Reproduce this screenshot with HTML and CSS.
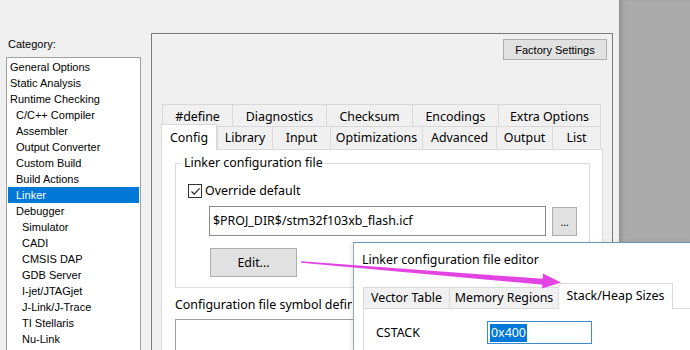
FILE: index.html
```html
<!DOCTYPE html>
<html>
<head>
<meta charset="utf-8">
<title>Linker options</title>
<link rel="stylesheet" href="styles.css">
</head>
<body>
<div class="screen">
  <div class="window">
    <div class="side">
      <div class="cat-label">Category:</div>
      <ul class="cat-list">
        <li>General Options</li>
        <li>Static Analysis</li>
        <li>Runtime Checking</li>
        <li class="l1">C/C++ Compiler</li>
        <li class="l1">Assembler</li>
        <li class="l1">Output Converter</li>
        <li class="l1">Custom Build</li>
        <li class="l1">Build Actions</li>
        <li class="l1 sel">Linker</li>
        <li class="l1">Debugger</li>
        <li class="l2">Simulator</li>
        <li class="l2">CADI</li>
        <li class="l2">CMSIS DAP</li>
        <li class="l2">GDB Server</li>
        <li class="l2">I-jet/JTAGjet</li>
        <li class="l2">J-Link/J-Trace</li>
        <li class="l2">TI Stellaris</li>
        <li class="l2">Nu-Link</li>
      </ul>
    </div>
    <div class="panel">
      <div class="panel-head"><button class="btn factory">Factory Settings</button></div>
      <div class="tabs">
        <div class="tab-row back">
          <div class="tab t-define">#define</div>
          <div class="tab t-diag">Diagnostics</div>
          <div class="tab t-check">Checksum</div>
          <div class="tab t-enc">Encodings</div>
          <div class="tab t-extra last">Extra Options</div>
        </div>
        <div class="tab-row front">
          <div class="tab t-config active">Config</div>
          <div class="tab t-lib">Library</div>
          <div class="tab t-input">Input</div>
          <div class="tab t-opt">Optimizations</div>
          <div class="tab t-adv">Advanced</div>
          <div class="tab t-out">Output</div>
          <div class="tab t-list last">List</div>
        </div>
        <div class="pane">
          <fieldset class="group">
            <legend>Linker configuration file</legend>
            <div class="check-row">
              <span class="checkbox"><svg width="11" height="11" viewBox="0 0 11 11"><path d="M1.5 5.5 L4.2 8.2 L9.6 2.4" fill="none" stroke="#222" stroke-width="1.2"/></svg></span>
              <span>Override default</span>
            </div>
            <div class="path-row">
              <div class="path-field">$PROJ_DIR$/stm32f103xb_flash.icf</div>
              <button class="btn browse">...</button>
            </div>
            <button class="btn edit">Edit...</button>
          </fieldset>
          <div class="sym-label">Configuration file symbol defin</div>
          <div class="sym-box"></div>
        </div>
      </div>
    </div>
  </div>
  <div class="desktop"></div>

  <div class="dialog">
    <div class="dlg-title">Linker configuration file editor</div>
    <div class="dlg-tabs">
      <div class="dtab d-vec">Vector Table</div>
      <div class="dtab d-mem">Memory Regions</div>
      <div class="dtab d-stack active">Stack/Heap Sizes</div>
    </div>
    <div class="dlg-pane">
      <div class="dlg-row">
        <span class="dlg-label">CSTACK</span>
        <div class="dlg-input"><span class="selected-text">0x400</span></div>
      </div>
    </div>
  </div>

  <svg class="arrow" width="690" height="350" viewBox="0 0 690 350">
    <polygon points="301,261.3 301,262.8 546,285 546.3,279" fill="#e244e2"/>
    <polygon points="543,273.5 561,282.5 542,288.5" fill="#e244e2"/>
  </svg>
</div>
</body>
</html>
```
FILE: styles.css
```css
* { box-sizing: border-box; }
html, body { margin: 0; padding: 0; }
body {
  width: 690px;
  height: 350px;
  overflow: hidden;
  background: #f0f0f0;
  color: #000;
  font-family: "Noto Sans", "Liberation Sans", sans-serif;
  font-size: 12.4px;
}
.screen {
  position: relative;
  display: flex;
  width: 690px;
  height: 350px;
  overflow: hidden;
}
.window {
  width: 619px;
  height: 350px;
  display: flex;
  background: #f0f0f0;
}
.desktop {
  flex: 1;
  background: #aaaaaa;
  box-shadow: inset 5px 0 5px -3px rgba(0,0,0,0.18);
}

/* category list */
.side { width: 151px; padding-top: 37px; }
.cat-label {
  font-family: "Liberation Sans", Arial, sans-serif;
  font-size: 11px;
  line-height: 14px;
  height: 20px;
  padding-left: 8px;
}
.cat-list {
  list-style: none;
  margin: 0 0 0 6px;
  padding: 1px;
  width: 135px;
  height: 300px;
  border: 1px solid #a0a0a0;
  background: #fff;
  font-family: "Liberation Sans", Arial, sans-serif;
  font-size: 11px;
}
.cat-list li {
  height: 16px;
  line-height: 16px;
  padding-left: 2px;
  white-space: nowrap;
}
.cat-list li.l1 { padding-left: 8px; }
.cat-list li.l2 { padding-left: 14px; }
.cat-list li.sel { background: #0078d7; color: #fff; }

/* right panel */
.panel {
  width: 462px;
  height: 330px;
  margin-top: 33px;
  border: 1px solid #7a7a7a;
  border-bottom: none;
  display: flex;
  flex-direction: column;
}
.panel-head {
  display: flex;
  justify-content: flex-end;
  padding: 5px 5px 0 0;
}
.btn {
  font: inherit;
  color: #000;
  background: #e1e1e1;
  border: 1px solid #adadad;
  padding: 0;
  margin: 0;
}
.factory {
  width: 104px;
  height: 21px;
  font-family: "Liberation Sans", Arial, sans-serif;
  font-size: 11px;
}

/* tabs */
.tabs { margin: 44px 0 0 9px; width: 442px; }
.tab-row { display: flex; }
.tab-row.back { height: 22px; margin-left: 1px; }
.tab-row.front { height: 23px; align-items: flex-start; }
.tab {
  border-top: 1px solid #d9d9d9;
  border-left: 1px solid #d9d9d9;
  background: #f0f0f0;
  text-align: center;
  line-height: 18px;
  white-space: nowrap;
}
.tab.last { border-right: 1px solid #d9d9d9; }
.back .tab { height: 22px; padding-top: 3px; }
.front .tab { height: 23px; padding-top: 2px; }
.front .tab.active {
  position: relative;
  z-index: 1;
  height: 26px;
  margin-top: -2px;
  padding-top: 4px;
  background: #fff;
  border-right: 1px solid #d9d9d9;
}
.t-define { width: 70px; }
.t-diag { width: 94px; }
.t-check { width: 86px; }
.t-enc { width: 86px; }
.t-extra { width: 103px; }
.t-config { width: 56px; }
.t-lib { width: 55px; }
.t-input { width: 58px; }
.t-opt { width: 92px; }
.t-adv { width: 74px; }
.t-out { width: 56px; }
.t-list { width: 49px; }

.pane {
  width: 442px;
  height: 210px;
  background: #fff;
  border: 1px solid #d9d9d9;
  padding: 0 12px 0 13px;
}

/* group box */
.group {
  margin: 5px 0 0 0;
  padding: 0 12px 10px 12px;
  border: 1px solid #dcdcdc;
  min-width: 0;
}
.group legend {
  padding: 0 2px;
  margin-left: -6px;
  line-height: 16px;
}
.check-row {
  display: flex;
  align-items: center;
  height: 16px;
  margin-top: 12px;
  line-height: 16px;
}
.checkbox {
  width: 14px;
  height: 14px;
  border: 1px solid #333;
  background: #fff;
  display: flex;
  align-items: center;
  justify-content: center;
  margin-right: 3px;
}
.path-row {
  display: flex;
  align-items: flex-start;
  margin: 7px 0 0 21px;
}
.path-field {
  width: 341px;
  height: 30px;
  border: 1px solid #8a8a8a;
  background: #fff;
  padding: 0 3px;
  line-height: 28px;
  white-space: nowrap;
}
.browse {
  width: 25px;
  height: 29px;
  margin: 1px 0 0 6px;
  font-size: 10px;
  line-height: 20px;
}
.edit {
  display: block;
  width: 87px;
  height: 29px;
  margin: 12px 0 0 22px;
}
.sym-label {
  margin-top: 9px;
  width: 177px;
  overflow: hidden;
  line-height: 16px;
  white-space: nowrap;
}
.sym-box {
  margin-top: 6px;
  height: 60px;
  border: 1px solid #a0a0a0;
  border-bottom: none;
}

/* dialog */
.dialog {
  position: absolute;
  left: 353px;
  top: 242px;
  width: 340px;
  height: 110px;
  background: #fff;
  border-top: 1px solid #6f93bd;
  border-left: 1px solid #9aa6b4;
  box-shadow: -2px 0 4px rgba(0,0,0,0.08);
  padding-top: 9px;
}
.dlg-title {
  padding-left: 8px;
  line-height: 16px;
  white-space: nowrap;
}
.dlg-tabs {
  display: flex;
  align-items: flex-end;
  height: 25px;
  margin: 15px 0 0 9px;
}
.dtab {
  height: 21px;
  padding-top: 1px;
  line-height: 18px;
  text-align: center;
  background: #f0f0f0;
  border-top: 1px solid #d9d9d9;
  border-left: 1px solid #d9d9d9;
  white-space: nowrap;
}
.dtab.active {
  position: relative;
  z-index: 1;
  height: 26px;
  margin-bottom: -1px;
  padding-top: 3px;
  background: #fff;
  border-right: 1px solid #d9d9d9;
}
.d-vec { width: 86px; }
.d-mem { width: 109px; }
.d-stack { width: 115px; }
.dlg-pane {
  margin-left: 9px;
  height: 60px;
  border-top: 1px solid #d9d9d9;
  border-left: 1px solid #d9d9d9;
  background: #fff;
  padding: 12px 0 0 12px;
}
.dlg-row { display: flex; align-items: center; height: 23px; }
.dlg-label { width: 111px; }
.dlg-input {
  width: 105px;
  height: 23px;
  border: 1px solid #3c8ad0;
  padding: 1px 0 0 2px;
  display: flex;
  align-items: center;
}
.selected-text {
  background: #0078d7;
  color: #fff;
  line-height: 18px;
  padding: 0 1px;
}

.arrow {
  position: absolute;
  left: 0;
  top: 0;
  pointer-events: none;
}
```
